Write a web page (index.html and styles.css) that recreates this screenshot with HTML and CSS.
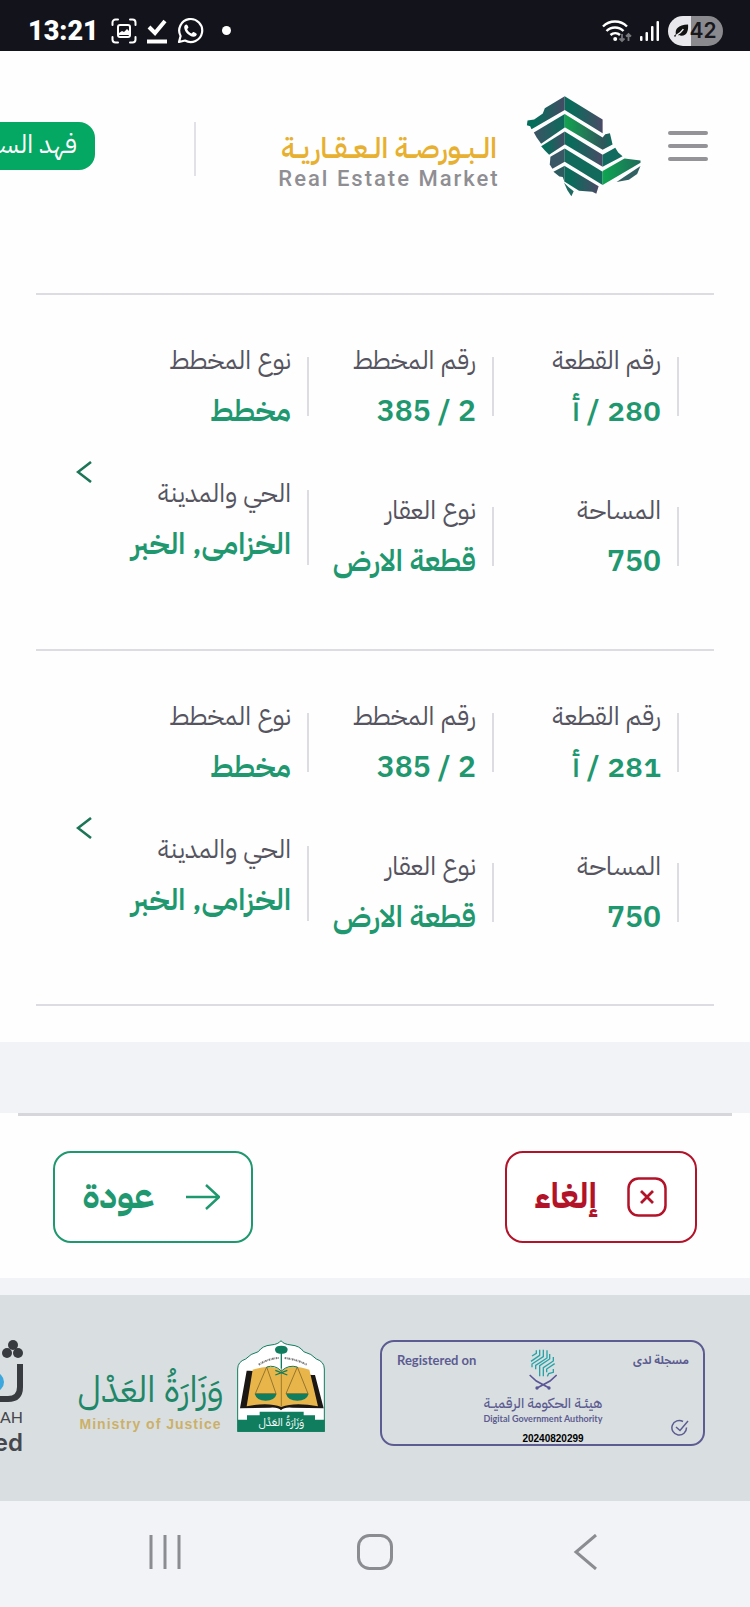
FILE: index.html
```html
<!DOCTYPE html>
<html lang="ar" dir="rtl">
<head>
    <meta charset="UTF-8">
    <meta name="viewport" content="width=device-width, initial-scale=1.0">
    <title>البورصة العقارية</title>
    <link rel="stylesheet" href="styles.css">
</head>
<body>
    <!-- Phone status bar -->
    <div class="status-bar" dir="ltr">
        <div class="status-side">
            <span class="clock">13:21</span>
            <svg class="status-icon" width="26" height="26" viewBox="0 0 26 26" fill="none" stroke="#fff" stroke-width="2" stroke-linecap="round">
                <path d="M1.500 7V4.500a3 3 0 0 1 3-3H7M19 1.500h2.500a3 3 0 0 1 3 3V7M24.500 19v2.500a3 3 0 0 1-3 3H19M7 24.500H4.500a3 3 0 0 1-3-3V19"/>
                <rect x="7" y="7" width="12" height="12" rx="2"/>
                <path d="M8 17v-2l3-2 2 1 3-3 2 2v4z" fill="#fff" stroke="none"/>
            </svg>
            <svg class="status-icon" width="20" height="26" viewBox="0 0 20 26" fill="none" stroke="#fff">
                <path d="M2 9l6 6L18 3" stroke-width="4"/>
                <path d="M0 23.500h20" stroke-width="4"/>
            </svg>
            <svg class="status-icon" width="27" height="27" viewBox="0 0 27 27">
                <path d="M2 25l1.600-6A11.500 11.500 0 1 1 8 23.500z" fill="none" stroke="#fff" stroke-width="2.200" stroke-linejoin="round"/>
                <path d="M9.500 7.500c-1.500 0-2.500 1.500-2.300 3.200.5 4.300 5 8.600 9.300 9 1.800.1 3.300-1 3.300-2.600 0-.8-3-2.300-3.600-2.200-.6.200-1.100 1.600-1.700 1.500-1.900-.6-3.800-2.600-4.300-4.200 0-.6 1.200-1 1.200-1.700 0-.6-1-3-1.900-3z" fill="#fff"/>
            </svg>
            <span class="dot"></span>
        </div>
        <div class="status-side status-right">
            <svg width="30" height="24" viewBox="0 0 30 24" fill="none" stroke="#fff" stroke-width="2.400">
                <path d="M1 7.500a17 17 0 0 1 24 0M4.500 12a12 12 0 0 1 17 0M8.500 16a7 7 0 0 1 9.500 0"/>
                <circle cx="13.200" cy="20" r="2" fill="#fff" stroke="none"/>
                <path d="M20 15v7M17.500 19.500L20 22l2.500-2.500M26.500 22v-7M24 17.500l2.500-2.500 2.500 2.500" stroke="#77777d" stroke-width="1.800"/>
            </svg>
            <svg width="20" height="22" viewBox="0 0 20 22" fill="#fff">
                <rect x="0" y="16" width="2.500" height="5" rx="1"/>
                <rect x="5.500" y="12" width="2.500" height="9" rx="1"/>
                <rect x="11" y="6" width="2.500" height="15" rx="1"/>
                <rect x="16.500" y="1" width="2.500" height="20" rx="1"/>
            </svg>
            <span class="battery">
                <svg width="15" height="15" viewBox="0 0 16 15">
                    <path d="M1 14.500L0 13l2-1.500C1 6 4 1.500 15 1c.5 6-1 12-7 12-2 0-3.500-.5-4.500-1z" fill="#111"/>
                    <path d="M2 13c3-1.500 6-4 8-7" stroke="#e8e8ec" stroke-width="1.500" fill="none"/>
                </svg>
                <span>42</span>
            </span>
        </div>
    </div>

    <header class="site-header">
        <button class="menu-btn" type="button" aria-label="القائمة">
            <span></span>
            <span></span>
            <span></span>
        </button>
        <a class="brand" href="#">
            <svg width="116" height="101" viewBox="36 32 348 304">
                <defs>
                    <linearGradient id="darkLeft" x1="0" x2="1">
                        <stop offset="0.200" stop-color="#046e5b"/>
                        <stop offset="1" stop-color="#454a64"/>
                    </linearGradient>
                    <linearGradient id="darkRight" x1="0" x2="1">
                        <stop offset="0.200" stop-color="#0b6b5b"/>
                        <stop offset="1" stop-color="#4a4a66"/>
                    </linearGradient>
                    <linearGradient id="tealLeft" x1="0" x2="1">
                        <stop offset="0" stop-color="#3d5365"/>
                        <stop offset="1" stop-color="#0b6b5b"/>
                    </linearGradient>
                    <linearGradient id="brightOut" x1="0" x2="1">
                        <stop offset="0" stop-color="#10a550"/>
                        <stop offset="0.800" stop-color="#31565c"/>
                        <stop offset="1" stop-color="#0b6b5b"/>
                    </linearGradient>
                    <linearGradient id="brightEnd" x1="0" x2="1">
                        <stop offset="0" stop-color="#0ea651"/>
                        <stop offset="1" stop-color="#1f6a5a"/>
                    </linearGradient>
                </defs>
                <path fill="url(#darkLeft)" d="M152 33L92 69l-6 16-26 18-20 3-2 14 10 3 4 9 100-58z"/>
                <path fill="url(#darkRight)" d="M152 33l114 70v41L152 74z"/>
                <path fill="url(#tealLeft)" d="M152 86L59 142l8 14 14 20 71-49z"/>
                <path fill="url(#brightOut)" d="M152 86l114 71 8-10 14-3 8 34-30 16-114-68z"/>
                <path fill="url(#darkLeft)" d="M152 139l-71 44 12 14 12 12 47-31z"/>
                <path fill="url(#darkRight)" d="M152 139l114 70V245l-114-68z"/>
                <path fill="#116b5e" d="M266 209l38-21 9 14 13 11-60 32z"/>
                <path fill="#395765" d="M152 190l-43 25-2 23 8 13 37-21z"/>
                <path fill="#126a5c" d="M152 190l114 70v40l-114-70z"/>
                <path fill="url(#brightEnd)" d="M266 258l66-38 48 6v7l-114 67z"/>
                <path fill="#315f62" d="M380 243l-10 24-25 17-37 7z"/>
                <path fill="#2c5c60" d="M118 260l34-18v50l-6-16-10-2z"/>
                <path fill="url(#darkRight)" d="M152 243l102 61-7 22-12-6-40-3-43-27z"/>
                <path fill="#1f6a60" d="M150 293l14 14 15 12-7 15-12-18z"/>
            </svg>
            <span class="brand-text">
                <span class="brand-ar">الــبــورصــة الــعــقــاريــة</span>
                <span class="brand-en" dir="ltr">Real Estate Market</span>
            </span>
        </a>
        <span class="header-divider"></span>
        <a class="user-pill" href="#">فهد السـ</a>
    </header>

    <main>
        <section class="deeds">
            <article class="deed">
                <div class="deed-col">
                    <div class="field">
                        <span class="field-label">رقم القطعة</span>
                        <span class="field-value">280 / أ</span>
                    </div>
                    <div class="field">
                        <span class="field-label">المساحة</span>
                        <span class="field-value">750</span>
                    </div>
                </div>
                <div class="deed-col">
                    <div class="field">
                        <span class="field-label">رقم المخطط</span>
                        <span class="field-value">2 / 385</span>
                    </div>
                    <div class="field">
                        <span class="field-label">نوع العقار</span>
                        <span class="field-value">قطعة الارض</span>
                    </div>
                </div>
                <div class="deed-col deed-col-last">
                    <div class="field">
                        <span class="field-label">نوع المخطط</span>
                        <span class="field-value">مخطط</span>
                    </div>
                    <div class="field field-tall">
                        <span class="field-label">الحي والمدينة</span>
                        <span class="field-value">الخزامى, الخبر</span>
                    </div>
                </div>
                <button class="deed-open" type="button" aria-label="عرض التفاصيل">
                    <svg width="16" height="22" viewBox="0 0 16 22" fill="none" stroke="#1d7558" stroke-width="2.600">
                        <path d="M15 1L2 11l13 10"/>
                    </svg>
                </button>
            </article>

            <article class="deed">
                <div class="deed-col">
                    <div class="field">
                        <span class="field-label">رقم القطعة</span>
                        <span class="field-value">281 / أ</span>
                    </div>
                    <div class="field">
                        <span class="field-label">المساحة</span>
                        <span class="field-value">750</span>
                    </div>
                </div>
                <div class="deed-col">
                    <div class="field">
                        <span class="field-label">رقم المخطط</span>
                        <span class="field-value">2 / 385</span>
                    </div>
                    <div class="field">
                        <span class="field-label">نوع العقار</span>
                        <span class="field-value">قطعة الارض</span>
                    </div>
                </div>
                <div class="deed-col deed-col-last">
                    <div class="field">
                        <span class="field-label">نوع المخطط</span>
                        <span class="field-value">مخطط</span>
                    </div>
                    <div class="field field-tall">
                        <span class="field-label">الحي والمدينة</span>
                        <span class="field-value">الخزامى, الخبر</span>
                    </div>
                </div>
                <button class="deed-open" type="button" aria-label="عرض التفاصيل">
                    <svg width="16" height="22" viewBox="0 0 16 22" fill="none" stroke="#1d7558" stroke-width="2.600">
                        <path d="M15 1L2 11l13 10"/>
                    </svg>
                </button>
            </article>
        </section>

        <div class="spacer"></div>

        <section class="actions">
            <button class="btn btn-cancel" type="button">
                <svg width="40" height="40" viewBox="0 0 40 40" fill="none" stroke="currentColor">
                    <rect x="1.500" y="1.500" width="37" height="37" rx="10" stroke-width="2.500"/>
                    <path d="M14 14l12 12M26 14L14 26" stroke-width="2.800"/>
                </svg>
                <span>إلغاء</span>
            </button>
            <button class="btn btn-back" type="button">
                <svg width="34" height="26" viewBox="0 0 34 26" fill="none" stroke="currentColor" stroke-width="2.400" stroke-linejoin="round">
                    <path d="M0 13h33M20 1l13 12-13 12"/>
                </svg>
                <span>عودة</span>
            </button>
        </section>
    </main>

    <footer class="site-footer">
        <div class="dga" dir="ltr">
            <span class="dga-registered">Registered on</span>
            <div class="dga-center">
                <svg width="28" height="42" viewBox="508 233 84 126" fill="none" stroke-width="4">
                    <g stroke="#27a3a8">
                        <path d="M517 257l13-8V240M514 273l26-18V238M517 291v-10l34-22V238M528 297v-12l34-22V240M540 318v-32l30-20v-15M551 318v-26l30-20v-12M561 306v-10l24-16M563 318l4-8 14-4v-10"/>
                    </g>
                    <path d="M510 314l20 18 40 22M591 314l-20 18-40 22" stroke="#5a5697" stroke-width="5"/>
                    <circle cx="532" cy="353" r="5" fill="#5a5697"/>
                    <circle cx="568" cy="353" r="5" fill="#5a5697"/>
                </svg>
                <span class="dga-ar" dir="rtl">هيئــة الحكومة الرقميــة</span>
                <span class="dga-en">Digital Government Authority</span>
                <span class="dga-number">20240820299</span>
            </div>
            <div class="dga-side">
                <span class="dga-registered dga-registered-ar" dir="rtl">مسجلة لدى</span>
                <svg width="18" height="18" viewBox="0 0 18 18" fill="none" stroke="#5d5c92" stroke-width="1.500">
                    <path d="M12 2.500A7.300 7.300 0 1 0 15.500 8.500M5 8l4 3.500L17 2"/>
                </svg>
            </div>
        </div>

        <div class="moj">
            <svg width="88" height="92" viewBox="711 213 264 276">
                <path d="M713 488V300q0-22 24-30 14-16 38-22 12-18 38-20 22-2 30-13 8 11 30 13 26 2 38 20 24 6 38 22 24 8 24 30v188z" fill="#fff" stroke="#0f7d5e" stroke-width="3"/>
                <path d="M748 305h-8l-20 113 90-2q24-2 33 8 9-10 33-8l95 2-26-100h-8z" fill="#1b1714"/>
                <path d="M758 302q60-20 86 4 26-24 84-4l26 110q-70-14-110 2-40-16-104-2z" fill="#e8b54a"/>
                <path d="M844 300v112" stroke="#7a5c1e" stroke-width="2"/>
                <path d="M800 294l-34 80h62zM892 294l-34 80h66z" fill="none" stroke="#6d5520" stroke-width="2"/>
                <path d="M764 374h66q-6 21-33 21t-33-21zM858 374h68q-6 21-34 21t-34-21z" fill="#0f7d5e"/>
                <path d="M800 294q24-8 44 12 22-20 48-12" fill="none" stroke="#0f7d5e" stroke-width="3"/>
                <path d="M844 245v54M826 318l36-14M862 318l-36-14" stroke="#0f7d5e" stroke-width="4"/>
                <path d="M825 240q2-10 19-10t19 10q0 14-14 14h-10q-14 0-14-14z" fill="#0f7d5e"/>
                <path d="M776 287q28-18 60-20M854 267q36 4 66 20" fill="none" stroke="#777" stroke-width="6" stroke-dasharray="5 2 2 2"/>
                <path d="M713 452h28v-13h38v-11h132v11h34v13h29v36H713z" fill="#0f7d5e"/>
                <text x="844" y="472" text-anchor="middle" class="emblem-text">وَزَارَةُ العَدْل</text>
            </svg>
            <div class="moj-text">
                <span class="moj-ar">وَزَارَةُ العَدْل</span>
                <span class="moj-en" dir="ltr">Ministry of Justice</span>
            </div>
        </div>

        <div class="thiqah" dir="ltr">
            <svg width="60" height="64" viewBox="0 0 60 64">
                <g fill="#383b40">
                    <circle cx="50" cy="5" r="5"/>
                    <circle cx="44" cy="13" r="5"/>
                    <circle cx="55" cy="13" r="5"/>
                </g>
                <circle cx="31" cy="42" r="10" fill="#3ba7dd"/>
                <path d="M57 24v23q0 12-12 12H20" fill="none" stroke="#383b40" stroke-width="6"/>
            </svg>
            <span class="thiqah-name">AH</span>
            <span class="thiqah-by">ed</span>
        </div>
    </footer>

    <!-- Android navigation -->
    <nav class="phone-nav" dir="ltr">
        <button type="button" aria-label="Recents">
            <svg width="34" height="34" viewBox="0 0 34 34" stroke="#8b8c91" stroke-width="3">
                <path d="M3 0v34M17 0v34M31 0v34"/>
            </svg>
        </button>
        <button type="button" aria-label="Home">
            <svg width="36" height="36" viewBox="0 0 36 36" fill="none" stroke="#8b8c91" stroke-width="3">
                <rect x="1.500" y="1.500" width="33" height="33" rx="11"/>
            </svg>
        </button>
        <button type="button" aria-label="Back">
            <svg width="24" height="36" viewBox="0 0 24 36" fill="none" stroke="#8b8c91" stroke-width="3">
                <path d="M23 1L3 18l20 17"/>
            </svg>
        </button>
    </nav>
</body>
</html>
```
FILE: styles.css
```css
* {
    box-sizing: border-box;
}
body {
    margin: 0;
    background: #fefefe;
    font-family: "IBM Plex Sans Arabic", "Noto Sans Arabic", "Noto Sans", "DejaVu Sans", sans-serif;
    color: #4b4a55;
    overflow-x: hidden;
}
button {
    font-family: inherit;
    background: none;
    border: none;
    padding: 0;
    cursor: pointer;
}
a {
    color: inherit;
    text-decoration: none;
}
svg {
    display: block;
    flex-shrink: 0;
}

/* status bar */
.status-bar {
    display: flex;
    justify-content: space-between;
    align-items: center;
    height: 51px;
    padding: 10px 27px 0 28px;
    background: #13131b;
    color: #fff;
}
.status-side {
    display: flex;
    align-items: center;
    gap: 10px;
}
.status-right {
    gap: 8px;
}
.clock {
    margin-right: 2px;
    font-family: Roboto, sans-serif;
    font-size: 27px;
    font-weight: 900;
    line-height: 32px;
}
.dot {
    width: 9px;
    height: 9px;
    margin-left: 8px;
    border-radius: 50%;
    background: #fff;
}
.battery {
    display: flex;
    align-items: center;
    justify-content: center;
    width: 55px;
    height: 30px;
    border-radius: 15px;
    background: linear-gradient(90deg, #e8e8ec 42%, #8a8a8e 42%);
    color: #17171c;
    font-family: Inter, sans-serif;
    font-size: 21px;
    font-weight: 600;
}

/* header */
.site-header {
    display: flex;
    align-items: center;
    height: 190px;
    padding-right: 42px;
    overflow: hidden;
}
.site-header > * {
    flex-shrink: 0;
}
.menu-btn {
    display: flex;
    flex-direction: column;
    gap: 9px;
    width: 40px;
}
.menu-btn span {
    height: 4px;
    border-radius: 2px;
    background: #949398;
}
.brand {
    display: flex;
    align-items: center;
    gap: 24px;
    margin-right: 26px;
}
.brand-text {
    display: flex;
    flex-direction: column;
    align-items: center;
    width: 226px;
    padding-top: 34px;
}
.brand-ar {
    color: #e8b030;
    font-size: 28px;
    font-weight: 600;
    line-height: 32px;
    white-space: nowrap;
}
.brand-en {
    color: #8f8e93;
    font-family: Roboto, sans-serif;
    font-size: 22px;
    font-weight: 500;
    letter-spacing: 2px;
    line-height: 28px;
    white-space: nowrap;
}
.header-divider {
    width: 2px;
    height: 54px;
    margin-top: 6px;
    margin-right: 80px;
    background: #e2e1e7;
}
.user-pill {
    height: 48px;
    margin-right: 99px;
    padding: 0 18px;
    border-radius: 16px;
    background: #05a862;
    color: #fff;
    font-size: 26px;
    line-height: 46px;
}

/* deeds list */
.deeds {
    margin: 52px 36px 0;
    padding-bottom: 36px;
}
.deed {
    display: flex;
    align-items: flex-start;
    height: 356px;
    padding: 42px 35px 0 40px;
    border-top: 2px solid #dddce2;
}
.deed:last-child {
    height: 357px;
    border-bottom: 2px solid #dddce2;
}
.deed-col {
    display: flex;
    flex-direction: column;
    gap: 50px;
    width: 185px;
}
.deed-col-last {
    gap: 33px;
}
.field {
    position: relative;
    display: flex;
    flex-direction: column;
    padding-right: 18px;
    white-space: nowrap;
}
.field::before {
    content: "";
    position: absolute;
    top: 20px;
    right: 0;
    bottom: 21px;
    width: 2px;
    background: #dddce2;
}
.field-tall::before {
    bottom: 5px;
}
.field-label {
    color: #55545f;
    font-size: 26px;
    line-height: 48px;
}
.field-value {
    color: #1f9870;
    font-size: 30px;
    font-weight: 600;
    line-height: 52px;
}
.deed-open {
    align-self: center;
    margin-right: auto;
    margin-bottom: 42px;
}

/* actions */
.spacer {
    height: 71px;
    background: #f2f3f6;
}
.actions {
    display: flex;
    justify-content: space-between;
    margin: 0 18px;
    padding: 35px;
    border-top: 3px solid #d6d6db;
}
.btn {
    display: flex;
    align-items: center;
    justify-content: center;
    gap: 30px;
    height: 92px;
    padding: 0 28px;
    border: 2px solid;
    border-radius: 18px;
    background: #fff;
    font-size: 35px;
    font-weight: bold;
    line-height: 48px;
}
.btn-cancel {
    color: #b31329;
}
.btn-back {
    gap: 32px;
    padding-right: 31px;
    color: #1f9870;
}

/* footer */
.site-footer {
    display: flex;
    align-items: flex-start;
    gap: 55px;
    height: 223px;
    padding: 45px 45px 0 0;
    border-top: 17px solid #f2f3f6;
    background: #d9dfe0;
    overflow: hidden;
}
.site-footer > * {
    flex-shrink: 0;
}
.dga {
    display: grid;
    grid-template-columns: 1fr auto 1fr;
    width: 325px;
    height: 106px;
    padding: 6px 14px 0 15px;
    border: 2px solid #5d5c92;
    border-radius: 14px;
    color: #5d5c92;
}
.dga-registered {
    width: 0;
    font-family: Lato, "Noto Sans Arabic", "DejaVu Sans", sans-serif;
    font-size: 13px;
    font-weight: bold;
    line-height: 24px;
    white-space: nowrap;
}
.dga-registered-ar {
    width: auto;
    font-size: 11px;
}
.dga-center {
    display: flex;
    flex-direction: column;
    align-items: center;
    white-space: nowrap;
}
.dga-ar {
    margin-top: 6px;
    font-size: 14px;
    font-weight: 500;
    line-height: 16px;
}
.dga-en {
    font-family: Lato, sans-serif;
    font-size: 9px;
    font-weight: bold;
    line-height: 14px;
}
.dga-number {
    margin: 7px 0 0 20px;
    color: #000;
    font-family: "Liberation Sans", sans-serif;
    font-size: 10px;
    font-weight: bold;
    line-height: 12px;
}
.dga-side {
    display: flex;
    flex-direction: column;
    justify-content: space-between;
    align-items: flex-end;
    padding-bottom: 8px;
}
.moj {
    display: flex;
    align-items: flex-start;
    gap: 14px;
}
.emblem-text {
    fill: #fff;
    font-size: 34px;
}
.moj-text {
    display: flex;
    flex-direction: column;
    align-items: center;
    width: 145px;
    padding-top: 26px;
    white-space: nowrap;
}
.moj-ar {
    color: #1f8768;
    font-size: 36px;
    line-height: 48px;
}
.moj-en {
    color: #ccb069;
    font-family: "Liberation Sans", sans-serif;
    font-size: 14px;
    font-weight: bold;
    letter-spacing: 1px;
    line-height: 20px;
}
.thiqah {
    display: flex;
    flex-direction: column;
    align-items: flex-end;
    color: #45474d;
}
.thiqah-name {
    font-family: Lato, sans-serif;
    font-size: 16px;
    line-height: 26px;
}
.thiqah-by {
    font-family: Inter, sans-serif;
    font-size: 24px;
    font-weight: 600;
    line-height: 26px;
}

/* phone navigation */
.phone-nav {
    display: grid;
    grid-template-columns: repeat(3, 1fr);
    align-items: center;
    height: 106px;
    padding: 0 60px 4px;
    background: #f1f3f7;
}
.phone-nav button {
    display: flex;
    justify-content: center;
}
```
